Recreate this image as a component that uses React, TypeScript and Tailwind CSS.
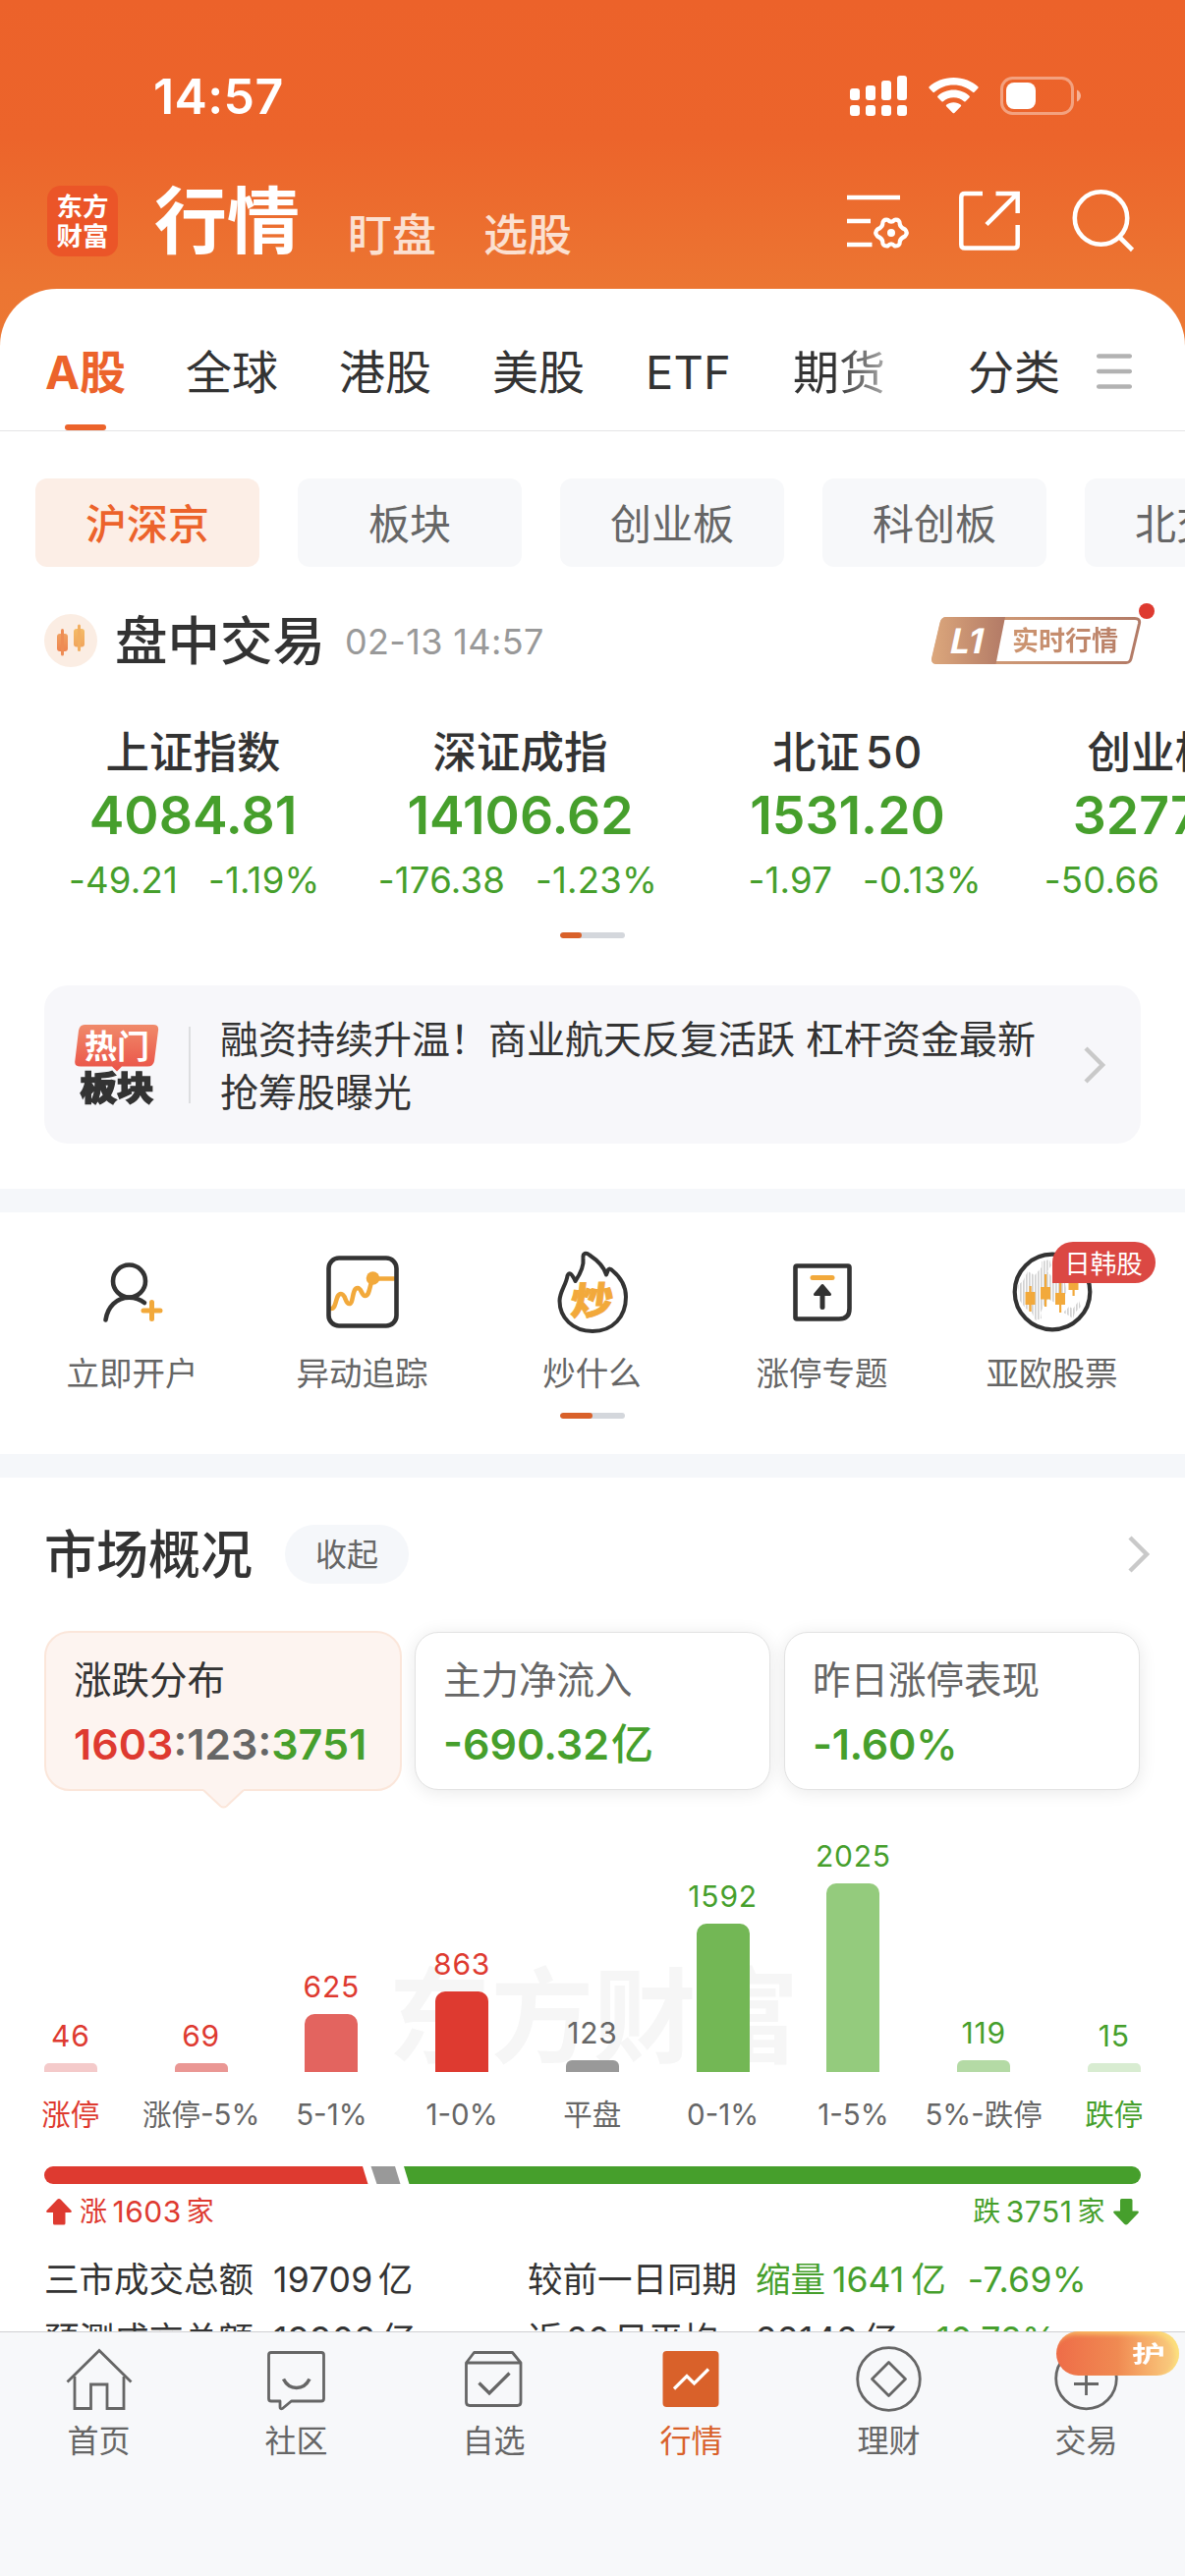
import React from "react";

const FONT = "font-['Inter','Noto_Sans_CJK_SC',sans-serif]";

/* ---------- status bar and header ---------- */

function StatusBar() {
  return (
    <div className="flex h-[154px] items-start pt-[68px] pl-[156px] pr-[106px] text-white">
      <div className="h-[60px] text-[50px] font-semibold leading-[60px] tracking-[0.4px]">14:57</div>
      <svg className="mt-[9px] ml-auto" width="58" height="42" viewBox="0 0 58 42" fill="#fff">
        <rect x="0" y="13" width="10" height="12" rx="3" />
        <rect x="16" y="10" width="10" height="15" rx="3" />
        <rect x="32" y="5" width="10" height="20" rx="3" />
        <rect x="48" y="0" width="10" height="25" rx="3" />
        <rect x="0" y="30" width="10" height="11" rx="3" />
        <rect x="16" y="30" width="10" height="11" rx="3" />
        <rect x="32" y="30" width="10" height="11" rx="3" />
        <rect x="48" y="30" width="10" height="11" rx="3" />
      </svg>
      <svg className="mt-[10px] ml-[22px]" width="51" height="38" viewBox="0 0 51 38" fill="#fff">
        <path d="M25.5 1C35.5 1 44.600 4.900 50.400 10.300Q51 11 50.400 11.800L46.600 15.800Q45.800 16.500 45 15.800C39.700 11.200 33 8.500 25.500 8.500S11.300 11.200 6 15.800Q5.200 16.500 4.400 15.800L.6 11.800Q0 11 .6 10.300C6.400 4.900 15.500 1 25.500 1Z" />
        <path d="M25.500 13.600C31.800 13.600 37.500 16 41.600 19.700Q42.300 20.500 41.600 21.200L37.600 25.200Q36.900 25.800 36.100 25.200C33.300 22.700 29.600 21.200 25.500 21.200S17.700 22.700 14.900 25.200Q14.100 25.800 13.400 25.200L9.400 21.200Q8.700 20.500 9.400 19.700C13.500 16 19.200 13.600 25.500 13.600Z" />
        <path d="M25.500 26.200C28.400 26.200 31 27.200 32.900 28.800Q33.600 29.500 32.900 30.200L26.300 36.900Q25.500 37.600 24.700 36.900L18.100 30.200Q17.400 29.500 18.100 28.800C20 27.200 22.600 26.200 25.500 26.200Z" />
      </svg>
      <svg className="mt-[10px] ml-[22px]" width="82" height="39" viewBox="0 0 82 39" fill="none">
        <rect x="1.500" y="1.500" width="72" height="36" rx="11" stroke="#fff" strokeOpacity="0.4" strokeWidth="3" />
        <rect x="6" y="6" width="30" height="27" rx="8" fill="#fff" />
        <path d="M78 13.500C80.500 14.500 82 17 82 19.500S80.500 24.500 78 25.500Z" fill="#fff" fillOpacity="0.5" />
      </svg>
    </div>
  );
}

function Header() {
  return (
    <div className="flex h-[140px] pl-12 pr-[50px] text-white">
      <div className="mt-[35px] flex h-[72px] w-[72px] flex-col items-center justify-center rounded-[14px] bg-[#eb5528] text-[26.500px] font-bold leading-[30px]">
        <div>东方</div>
        <div>财富</div>
      </div>
      <div className="mt-[31px] ml-[37px] h-[80px] text-[74px] font-bold leading-[80px]">行情</div>
      <div className="mt-[56px] ml-[49px] h-[60px] text-[45px] font-medium leading-[60px] text-[#fbe0d1]">盯盘</div>
      <div className="mt-[56px] ml-[48px] h-[60px] text-[45px] font-medium leading-[60px] text-[#fbe0d1]">选股</div>
      <svg className="mt-[39px] ml-auto" width="64" height="64" viewBox="0 0 64 64" fill="none" stroke="#fff" strokeWidth="4.500">
        <path d="M1 8H55M1 32H25M1 56H26.500" />
        <path
          strokeLinejoin="round"
          strokeWidth="4.200"
          d="M42.500 30.800Q46 34.500 49.500 30.800Q55 30 54.800 35.500Q55.500 38.500 60 40.500Q63.500 44 60 47.500Q55.500 49.500 54.800 52.500Q55 58 49.500 57.300Q46 53.500 42.500 57.300Q37 58 37.200 52.500Q36.500 49.500 32 47.500Q28.500 44 32 40.500Q36.500 38.500 37.200 35.500Q37 30 42.500 30.800Z"
        />
        <circle cx="46" cy="44" r="4" fill="#fff" stroke="none" />
      </svg>
      <svg className="mt-[39px] ml-[50px]" width="64" height="64" viewBox="0 0 64 64" fill="none" stroke="#fff" strokeWidth="4.500">
        <path d="M25 4H7Q3.300 4 3.300 7.700V56Q3.300 59.500 7 59.500H57Q60.700 59.500 60.700 56V36" />
        <path d="M38.500 4H60.700V24M60 4.500L29 35.500" />
      </svg>
      <svg className="mt-[38px] ml-[51px]" width="66" height="66" viewBox="0 0 66 66" fill="none" stroke="#fff" strokeWidth="4.600">
        <circle cx="30.500" cy="30" r="26.700" />
        <path d="M49 49L62.500 62.500" />
      </svg>
    </div>
  );
}

/* ---------- navigation inside the sheet ---------- */

function MarketTabs() {
  return (
    <div className="flex h-[145px] shrink-0 gap-[62px] border-b border-[#e4e4e6] pt-[55px] pl-[47px] pr-[54px] text-[47px] leading-[60px] text-[#333]">
      <div className="flex w-[80px] flex-col items-center font-bold text-[#ec632b]">
        <div className="whitespace-nowrap">A股</div>
        <div className="mt-[23px] h-[6px] w-[42px] rounded-[3px] bg-[#ec632b]" />
      </div>
      <div>全球</div>
      <div>港股</div>
      <div>美股</div>
      <div className="w-[88px] tracking-[0.200px]">ETF</div>
      <div className="bg-gradient-to-r from-[#333] from-45% to-[#aaa] bg-clip-text text-transparent">期货</div>
      <div className="ml-auto flex">
        <div>分类</div>
        <svg className="mt-[10px] ml-[37px]" width="36" height="40" viewBox="0 0 36 40" stroke="#b2b2b2" strokeWidth="4.500" strokeLinecap="round">
          <path d="M2.200 3.500H33.800M2.200 19H33.800M2.200 34.500H33.800" />
        </svg>
      </div>
    </div>
  );
}

function Pills() {
  const rest = ["板块", "创业板", "科创板", "北交所"];
  return (
    <div className="mt-12 flex h-[90px] shrink-0 gap-[39px] pl-9 text-[42px] leading-[93px]">
      <div className="w-[228px] shrink-0 rounded-xl bg-[#fceee6] text-center font-medium text-[#ec632b]">沪深京</div>
      {rest.map((t) => (
        <div key={t} className="w-[228px] shrink-0 rounded-xl bg-[#f7f8fa] text-center text-[#666]">
          {t}
        </div>
      ))}
    </div>
  );
}

function SessionRow() {
  return (
    <div className="mt-[35px] flex h-20 shrink-0 items-center pl-[45px] pr-[38px]">
      <svg width="54" height="54" viewBox="0 0 54 54">
        <defs>
          <linearGradient id="candleA" x1="0" y1="0" x2="0" y2="1">
            <stop offset="0" stopColor="#f0a060" />
            <stop offset="1" stopColor="#ee8450" />
          </linearGradient>
          <linearGradient id="candleB" x1="0" y1="0" x2="0" y2="1">
            <stop offset="0" stopColor="#f4bb66" />
            <stop offset="1" stopColor="#f0a45c" />
          </linearGradient>
        </defs>
        <circle cx="27" cy="27" r="27" fill="#fbede3" />
        <rect x="13" y="20" width="11" height="18" rx="3" fill="url(#candleA)" />
        <rect x="17" y="15" width="3" height="27.500" rx="1.500" fill="#ee8c54" />
        <rect x="30" y="15" width="11" height="18.500" rx="3" fill="url(#candleB)" />
        <rect x="34" y="10.500" width="3" height="27.500" rx="1.500" fill="#f2ae60" />
      </svg>
      <div className="ml-[18px] pt-[2px] text-[53.500px] font-medium leading-[80px] text-[#333]">盘中交易</div>
      <div className="ml-[20px] pt-px text-[36px] leading-[80px] tracking-[0.350px] text-[#999]">02-13 14:57</div>
      <div className="relative ml-auto h-12 w-[220px]">
        <svg width="220" height="48" viewBox="0 0 220 48">
          <defs>
            <linearGradient id="level" x1="0" y1="0" x2="1" y2="0">
              <stop offset="0" stopColor="#dca77c" />
              <stop offset="1" stopColor="#b27a66" />
            </linearGradient>
          </defs>
          <path d="M16 1.500H207Q212.500 1.500 211.500 6.500L203 42.500Q202 46.500 198 46.500H6Q0.500 46.500 1.700 41.500L10 6Q11 1.500 16 1.500Z" fill="#fff" stroke="url(#level)" strokeWidth="3" />
          <path d="M15 0H75L65.500 48H5Q-.7 48 .4 42L9 5Q10.200 0 15 0Z" fill="url(#level)" />
        </svg>
        <div className="absolute top-0 left-[20px] -skew-x-12 text-[35px] font-bold leading-[49px] text-white">L1</div>
        <div className="absolute top-0 left-[82px] bg-gradient-to-r from-[#cd9570] to-[#b98068] bg-clip-text text-[27px] font-bold leading-[50px] text-transparent">实时行情</div>
        <div className="absolute -top-[14px] left-[211px] h-4 w-4 rounded-full bg-[#de3a30]" />
      </div>
    </div>
  );
}

const INDICES = [
  ["上证指数", "", "4084.81", "-49.21", "-1.19%"],
  ["深证成指", "", "14106.62", "-176.38", "-1.23%"],
  ["北证", "50", "1531.20", "-1.97", "-0.13%"],
  ["创业板指", "", "3277.36", "-50.66", "-1.52%"],
];

function Indices() {
  return (
    <div className="mt-[44px] flex shrink-0 pl-[30px]">
      {INDICES.map(([name, digits, value, diff, pct]) => (
        <div key={name} className="w-[333px] shrink-0 text-center text-[#469f2c]">
          <div className="flex justify-center gap-[6px] text-[44.500px] font-medium leading-[60px] text-[#333]">
            {name}
            {digits && <span className="tracking-[0.800px]">{digits}</span>}
          </div>
          <div className="text-[53.500px] font-semibold leading-[67px]">{value}</div>
          <div className="grid grid-cols-2 gap-[31px] text-[36.500px] leading-[67px] tracking-[0.200px]">
            <div className="flex justify-end">{diff}</div>
            <div className="flex">{pct}</div>
          </div>
        </div>
      ))}
    </div>
  );
}

function Pager({ wide, className }: { wide?: boolean; className: string }) {
  return (
    <div className={`mx-auto h-[6px] w-[66px] shrink-0 overflow-hidden rounded-[3px] bg-[#d4d7dc] ${className}`}>
      <div className={`h-full rounded-[3px] bg-[#d9612a] ${wide ? "w-[33px]" : "w-[22px]"}`} />
    </div>
  );
}

function Chevron({ className }: { className: string }) {
  return (
    <svg className={className} width="24" height="40" viewBox="0 0 24 40" fill="none" stroke="#c9c9c9" strokeWidth="4.500">
      <path d="M3 3L20 20L3 37" />
    </svg>
  );
}

function HotCard() {
  return (
    <div className="mx-[45px] mt-12 flex h-[161px] shrink-0 items-center rounded-[24px] bg-[#f7f7fa]">
      <div className="ml-[31px] flex w-[86px] flex-col items-center">
        <div className="relative h-[48px] w-[86px]">
          <svg width="86" height="48" viewBox="0 0 86 48">
            <defs>
              <linearGradient id="hot" x1="0" y1="0" x2="0" y2="1">
                <stop offset="0" stopColor="#f08a6a" />
                <stop offset="1" stopColor="#ea5247" />
              </linearGradient>
            </defs>
            <path d="M10 0H80Q86 0 85 6L81 37Q80 42.500 74 42.500H48L43 47.500L38 42.500H6Q-.5 42.500 .3 37L4 6Q5 0 10 0Z" fill="url(#hot)" />
          </svg>
          <div className="absolute inset-x-0 top-0 text-center text-[33px] font-bold leading-[44px] text-white">热门</div>
        </div>
        <div className="scale-y-90 text-[37.500px] font-black leading-[34px] text-[#333] [-webkit-text-stroke:1.5px_#333]">板块</div>
      </div>
      <div className="ml-[30px] h-[78px] w-[2px] bg-[#dddee0]" />
      <div className="ml-[30px] w-[841px] whitespace-nowrap pt-[2px] text-[39px] leading-[54px] text-[#333]">
        融资持续升温！商业航天反复活跃 杠杆资金最新
        <br />
        抢筹股曝光
      </div>
      <Chevron className="ml-[37px]" />
    </div>
  );
}

/* ---------- shortcuts ---------- */

function Shortcut({ label, children }: { label: string; children: React.ReactNode }) {
  return (
    <div className="flex w-[234px] flex-col items-center">
      <div className="relative h-[90px] w-[90px]">{children}</div>
      <div className="mt-[13px] text-[33.500px] leading-[50px] text-[#666]">{label}</div>
    </div>
  );
}

function Shortcuts() {
  return (
    <div className="mt-9 flex shrink-0 pl-[17.500px]">
      <Shortcut label="立即开户">
        <svg width="90" height="90" viewBox="0 0 90 90" fill="none" stroke="#333" strokeWidth="4.600" strokeLinecap="round">
          <ellipse cx="41.500" cy="34" rx="16.500" ry="16.500" />
          <path d="M17.500 73.500C19.500 60 28.500 50.800 41.500 50.800C47.500 50.800 52.500 52.500 57 56" />
          <path d="M56 64H73M64.500 55.500V72.500" stroke="#f2a93b" strokeWidth="5" />
        </svg>
      </Shortcut>
      <Shortcut label="异动追踪">
        <svg width="90" height="90" viewBox="0 0 90 90" fill="none" strokeWidth="4.600">
          <path d="M13 62C19 62 17 47 23 47C28 47 27 57 31.500 57C36 57 34 41 40 41C44 41 44 49 47.500 49C52 49 52 40 55 31.500H77" stroke="#f2a93b" strokeLinecap="round" />
          <circle cx="55.500" cy="31" r="6.800" fill="#f2a93b" />
          <rect x="10.500" y="10.500" width="69" height="69" rx="10.500" stroke="#333" />
        </svg>
      </Shortcut>
      <Shortcut label="炒什么">
        <svg width="90" height="90" viewBox="0 0 90 90" fill="none" stroke="#333" strokeWidth="4" strokeLinejoin="round">
          <path d="M35.500 10.500C35 5 38.500 4.500 42 7.500C51 13.500 57 20 59 27.500L61 22.500Q62.500 20.500 65 23C73.500 30 79 39 79 50C79 70 66 85 45 85C25 85 11.500 71 11.500 54C11.500 45 18.500 37 19.500 28.500Q22 22 27.500 34C33 26 36.500 19 35.500 10.500Z" />
        </svg>
        <div className="absolute top-[34px] left-[23px] -skew-x-6 scale-y-90 text-[43px] font-black leading-[41px] text-[#f2a93b] [-webkit-text-stroke:1px_#f2a93b]">炒</div>
      </Shortcut>
      <Shortcut label="涨停专题">
        <svg width="90" height="90" viewBox="0 0 90 90" fill="none" stroke="#333" strokeWidth="4.600" strokeLinejoin="round" strokeLinecap="round">
          <path d="M19 18.500H71Q72.500 18.500 72.500 20V62Q72.500 72.500 62 72.500H19Q17.500 72.500 17.500 71V20Q17.500 18.500 19 18.500Z" />
          <path d="M35 30.500H55" stroke="#f2a93b" strokeWidth="5" />
          <path d="M45 44V60.500" strokeWidth="5" />
          <path d="M45 38.500L52.500 47.500H37.500Z" fill="#333" strokeWidth="3" />
        </svg>
      </Shortcut>
      <Shortcut label="亚欧股票">
        <svg width="90" height="90" viewBox="0 0 90 90" fill="none">
          <defs>
            <pattern id="dots" width="3" height="3" patternUnits="userSpaceOnUse">
              <rect width="1.700" height="3" fill="#d2d2d2" />
            </pattern>
          </defs>
          <path d="M10 38L15 34L20 24L27 28L34 20V14L42 12L44 18L40 24L45 30H52L58 36L60 46L52 50L48 56L40 52L36 60L33 66L34 72L28 74L24 66L18 62L12 54Z" fill="url(#dots)" />
          <path d="M56 66L62 60L66 62L72 54L74 60L68 66L66 72L60 68Z" fill="url(#dots)" />
          <circle cx="45" cy="45" r="38.300" stroke="#333" strokeWidth="4.200" />
          <g fill="#f2a93b">
            <rect x="17.500" y="45" width="10" height="13" />
            <rect x="21.500" y="39" width="2.200" height="26" />
            <rect x="33" y="40" width="10" height="12.500" />
            <rect x="37" y="27" width="2.200" height="33" />
            <rect x="48" y="46" width="10" height="12" />
            <rect x="52" y="34" width="2.200" height="32" />
            <rect x="61.500" y="33" width="10" height="10" />
            <rect x="65.500" y="30" width="2.200" height="19" />
          </g>
        </svg>
        <div className="absolute -top-[6px] left-[45px] h-[42px] w-[105px] rounded-[21px] rounded-bl-none bg-[#db4843] text-center text-[26.500px] leading-[44px] text-white">日韩股</div>
      </Shortcut>
    </div>
  );
}

/* ---------- market overview ---------- */

function OverviewCards() {
  return (
    <div className="mt-[38px] flex h-[163px] shrink-0 items-center pl-[45px] text-[43px] leading-[56px]">
      <div className="relative h-[163px] w-[364px] rounded-[26px] border-2 border-[#fbe6da] bg-[#fdf4f0] pt-[20px] pl-[28px]">
        <div className="text-[38.500px] text-[#333]">涨跌分布</div>
        <div className="mt-[9px] flex font-semibold">
          <span className="text-[#de3a30]">1603</span>
          <span className="text-[#666]">:123:</span>
          <span className="text-[#469f2c]">3751</span>
        </div>
        <svg className="absolute top-[157px] left-[159px]" width="44" height="22" viewBox="0 0 44 22">
          <path d="M1 3L18.500 20Q21.500 22 24.500 20L42 3V0H1Z" fill="#fdf4f0" />
          <path d="M1 3L18.500 19.500Q21.500 21.500 24.500 19.500L42 3" fill="none" stroke="#fbe6da" strokeWidth="2" />
        </svg>
      </div>
      <div className="ml-[13px] h-[161px] w-[362px] rounded-[24px] border border-[#e2e2e2] bg-white pt-[20px] pl-[28px] shadow-[0_2px_18px_rgba(0,0,0,0.09)]">
        <div className="text-[38.500px] text-[#666]">主力净流入</div>
        <div className="mt-[9px] flex font-semibold text-[#469f2c]">
          -690.32<span className="ml-[2px] font-medium">亿</span>
        </div>
      </div>
      <div className="ml-[14px] h-[161px] w-[362px] rounded-[24px] border border-[#e2e2e2] bg-white pt-[20px] pl-[28px] shadow-[0_2px_18px_rgba(0,0,0,0.09)]">
        <div className="text-[38.500px] text-[#666]">昨日涨停表现</div>
        <div className="mt-[9px] font-semibold tracking-[-0.300px] text-[#469f2c]">
          -1.60<span className="font-medium">%</span>
        </div>
      </div>
    </div>
  );
}

const BARS = [
  { n: "46", label: "涨停", h: "h-[9px] rounded-t-[5px]", bar: "bg-[#f4caca]", num: "text-[#de3a30]", cat: "text-[#de3a30]" },
  { n: "69", label: "涨停-5%", h: "h-[9px] rounded-t-[5px]", bar: "bg-[#ea9794]", num: "text-[#de3a30]", cat: "text-[#666]" },
  { n: "625", label: "5-1%", h: "h-[59px] rounded-t-[10px]", bar: "bg-[#e3645f]", num: "text-[#de3a30]", cat: "text-[#666]" },
  { n: "863", label: "1-0%", h: "h-[82px] rounded-t-[10px]", bar: "bg-[#de3a30]", num: "text-[#de3a30]", cat: "text-[#666]" },
  { n: "123", label: "平盘", h: "h-[12px] rounded-t-[6px]", bar: "bg-[#999]", num: "text-[#666]", cat: "text-[#666]" },
  { n: "1592", label: "0-1%", h: "h-[151px] rounded-t-[10px]", bar: "bg-[#73b755]", num: "text-[#469f2c]", cat: "text-[#666]" },
  { n: "2025", label: "1-5%", h: "h-[192px] rounded-t-[10px]", bar: "bg-[#94cb7d]", num: "text-[#469f2c]", cat: "text-[#666]" },
  { n: "119", label: "5%-跌停", h: "h-[12px] rounded-t-[6px]", bar: "bg-[#b4daa5]", num: "text-[#469f2c]", cat: "text-[#666]" },
  { n: "15", label: "跌停", h: "h-[9px] rounded-t-[5px]", bar: "bg-[#d8ecd1]", num: "text-[#469f2c]", cat: "text-[#469f2c]" },
];

function Distribution() {
  return (
    <div className="relative shrink-0">
      <div className="absolute top-[176px] left-[395px] text-[104.500px] font-bold leading-[108px] text-[#f6f6f6]">东方财富</div>
      <div className="relative flex pl-[5.500px]">
        {BARS.map((b) => (
          <div key={b.label} className="flex w-[132.750px] shrink-0 flex-col items-center">
            <div className="flex h-[286px] flex-col items-center justify-end">
              <div className={`mb-[8px] text-[30px] leading-[40px] tracking-[0.800px] ${b.num}`}>{b.n}</div>
              <div className={`w-[54px] ${b.h} ${b.bar}`} />
            </div>
            <div className={`mt-[23px] whitespace-nowrap text-[29.500px] leading-[40px] ${b.cat}`}>{b.label}</div>
          </div>
        ))}
      </div>
    </div>
  );
}

function Ratio() {
  return (
    <>
      <svg className="mx-[45px] mt-[33px] shrink-0" width="1116" height="18" viewBox="0 0 1116 18">
        <path d="M9 0H324L329.500 18H9A9 9 0 0 1 9 0Z" fill="#de3a30" />
        <path d="M332.500 0H357L362.500 18H338.500Z" fill="#999" />
        <path d="M366 0H1107A9 9 0 0 1 1107 18H371.500Z" fill="#469f2c" />
      </svg>
      <div className="mt-2 flex h-10 shrink-0 items-center justify-between pl-[47px] pr-[47px] text-[30px] leading-[40px] tracking-[0.500px]">
        <div className="flex items-center gap-[8px] text-[#de3a30]">
          <svg width="26" height="27" viewBox="0 0 26 27" fill="#de3a30">
            <path d="M13 0Q14 0 15 1L25.500 12Q26.500 14 24.500 14H19.500V25Q19.500 26.500 18 26.500H8.500Q7 26.500 7 25V14H1.500Q-.5 14 .5 12L11 1Q12 0 13 0Z" />
          </svg>
          <div className="flex gap-[5px]">
            <span className="text-[28px]">涨</span>1603<span className="text-[28px]">家</span>
          </div>
        </div>
        <div className="flex items-center gap-[8px] text-[#469f2c]">
          <div className="flex gap-[5px]">
            <span className="text-[28px]">跌</span>3751<span className="text-[28px]">家</span>
          </div>
          <svg width="26" height="27" viewBox="0 0 26 27" fill="#469f2c">
            <path d="M13 26.500Q12 26.500 11 25.500L.5 14.500Q-.5 12.500 1.500 12.500H7V1.500Q7 0 8.500 0H18Q19.500 0 19.500 1.500V12.500H24.500Q26.500 12.500 25.500 14.500L15 25.500Q14 26.500 13 26.500Z" />
          </svg>
        </div>
      </div>
    </>
  );
}

function Totals() {
  return (
    <div className="mt-5 shrink-0 pl-[45px] text-[35.500px] text-[#333]">
      <div className="flex h-[60px] leading-[60px]">
        <div className="w-[233px]">三市成交总额</div>
        <div className="flex w-[259px] gap-[5px] tracking-[0.400px]">
          19709<span>亿</span>
        </div>
        <div className="w-[232px]">较前一日同期</div>
        <div className="flex gap-[7px] text-[#469f2c]">
          <span>缩量</span>1641<span>亿</span>
        </div>
        <div className="ml-[22px] tracking-[0.300px] text-[#469f2c]">-7.69%</div>
      </div>
      <div className="flex h-[62px] leading-[62px]">
        <div className="w-[233px]">预测成交总额</div>
        <div className="flex w-[259px] gap-[5px] tracking-[0.400px]">
          19902<span>亿</span>
        </div>
        <div className="flex w-[232px] gap-[4px]">
          <span>近</span>20<span>日平均</span>
        </div>
        <div className="flex gap-[5px] tracking-[0.400px]">
          22142<span>亿</span>
        </div>
        <div className="ml-[22px] text-[#469f2c]">-10.72%</div>
      </div>
    </div>
  );
}

/* ---------- bottom navigation ---------- */

function NavItem({ label, active, children }: { label: string; active?: boolean; children: React.ReactNode }) {
  return (
    <div className="relative flex w-[201px] flex-col items-center">
      <svg className="mt-[11px]" width="72" height="72" viewBox="0 0 72 72" fill="none" stroke="#666" strokeWidth="2.800">
        {children}
      </svg>
      <div className={`mt-[8px] text-[32px] leading-[40px] ${active ? "text-[#d9612a]" : "text-[#666]"}`}>{label}</div>
    </div>
  );
}

function BottomNav() {
  return (
    <div className="flex h-[249px] border-t border-[#cfd0d2] bg-[#f7f8fa]">
      <NavItem label="首页">
        <path d="M3.500 39.500L36 7.500L68.500 39.500" />
        <path d="M11 34V66.500H27.500V42H44V66.500H61V34" />
      </NavItem>
      <NavItem label="社区">
        <path strokeLinejoin="round" d="M10 9.500H61Q63.500 9.500 63.500 12V56.500Q63.500 59 61 59H30.500L21.500 66.500Q19 67.500 19 65V59H10Q7.500 59 7.500 56.500V12Q7.500 9.500 10 9.500Z" />
        <path d="M22.500 36.500C28.500 48.500 43 48.500 49 36.500" strokeWidth="3.500" />
      </NavItem>
      <NavItem label="自选">
        <path strokeLinejoin="round" d="M7.500 20L15.500 9.500H54.500L63 20V60Q63 63.500 59.500 63.500H11Q7.500 63.500 7.500 60ZM7.500 20H63" />
        <path d="M20.500 40.500L31 51L51.500 30.500" strokeWidth="3.300" />
      </NavItem>
      <NavItem label="行情" active>
        <rect x="6.500" y="8" width="57" height="57" rx="4" fill="#d9612a" stroke="none" />
        <path d="M18 46.500L31 33.500L38.500 41L53 26.500" stroke="#fff" strokeWidth="3.200" />
      </NavItem>
      <NavItem label="理财">
        <circle cx="35.500" cy="36.500" r="31.800" />
        <path strokeLinejoin="round" d="M35.500 19.500L52.500 36.500L35.500 53.500L18.500 36.500Z" />
      </NavItem>
      <div className="relative">
        <NavItem label="交易">
          <circle cx="35.500" cy="36" r="30.800" />
          <path d="M23 30H48M23 41.500H48M35.500 24V53" />
        </NavItem>
        <div className="absolute -top-[1px] left-[70px] flex h-[45px] w-[125px] justify-end rounded-full bg-gradient-to-r from-[#ee6c48] via-[#f08a52] to-[#f9d384] pr-[14px] shadow-[inset_-4px_3px_5px_rgba(255,235,120,0.6)]">
          <div className="scale-y-[0.68] text-[34px] font-bold leading-[46px] text-white">护</div>
        </div>
      </div>
    </div>
  );
}

export default function App() {
  return (
    <div className={`${FONT} h-[2622px] w-[1206px] overflow-hidden bg-[linear-gradient(180deg,#ec622a_0px,#ec642b_140px,#ec7532_290px,#ec7833_360px)]`}>
      <StatusBar />
      <Header />
      <div className="flex h-[2079px] flex-col overflow-hidden rounded-t-[58px] bg-white">
        <MarketTabs />
        <Pills />
        <SessionRow />
        <Indices />
        <Pager className="mt-[19px]" />
        <HotCard />
        <div className="mt-[46px] h-6 shrink-0 bg-[#f5f7fa]" />
        <Shortcuts />
        <Pager wide className="mt-[15px]" />
        <div className="mt-9 h-6 shrink-0 bg-[#f5f7fa]" />
        <div className="mt-[38px] flex h-20 shrink-0 items-center pl-[45px] pr-[35px]">
          <div className="pt-[2px] text-[53px] font-medium leading-[80px] text-[#333]">市场概况</div>
          <div className="ml-[33px] h-[60px] w-[126px] rounded-full bg-[#f5f7fa] text-center text-[32px] leading-[61px] text-[#666]">收起</div>
          <Chevron className="ml-auto" />
        </div>
        <OverviewCards />
        <Distribution />
        <Ratio />
        <Totals />
      </div>
      <BottomNav />
    </div>
  );
}
